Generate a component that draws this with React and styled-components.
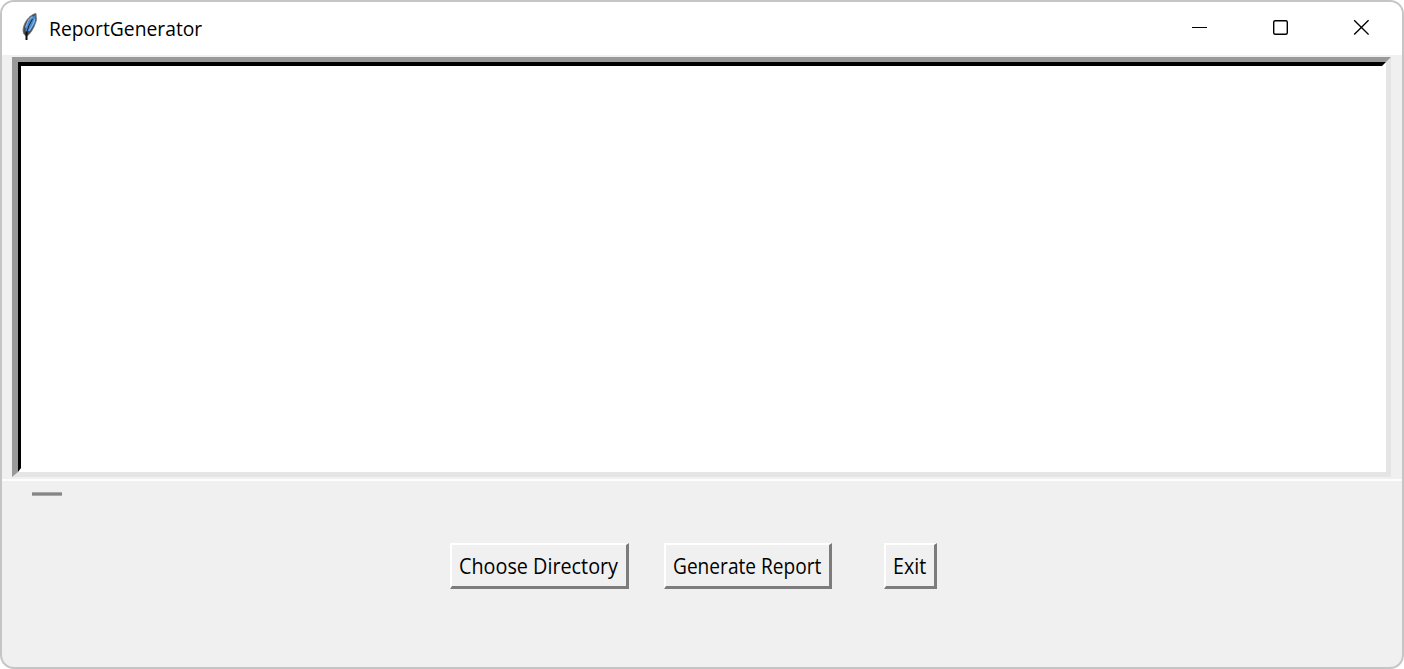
import React from 'react';
import styled, { createGlobalStyle } from 'styled-components';

const GlobalStyle = createGlobalStyle`
  * { box-sizing: border-box; }
  html, body { margin: 0; background: #fff; overflow: hidden; }
`;

const Window = styled.main`
  width: 1404px;
  height: 669px;
  display: flex;
  flex-direction: column;
  overflow: hidden;
  border: 2px solid #c5c5c5;
  border-radius: 14px;
  background: #f0f0f0;
  color: #000;
  font-family: 'Open Sans', 'Noto Sans', sans-serif;
`;

const TitleBar = styled.header`
  flex: none;
  height: 53px;
  display: flex;
  align-items: flex-start;
  background: #fff;
`;

const Feather = styled.svg`
  flex: none;
  width: 18px;
  height: 30px;
  margin: 10px 0 0 19px;
`;

const Title = styled.h1`
  margin: 12px auto 0 10px;
  font-size: 20.5px;
  line-height: 28px;
  font-weight: 400;
  white-space: nowrap;
  transform: scaleX(${(p) => p.$stretch});
  transform-origin: left;
`;

const WindowControls = styled.div`
  display: flex;
  gap: 65px;
  padding: 17px 33px 0 0;
`;

const ControlIcon = styled.svg`
  width: 16px;
  height: 17px;
  fill: none;
  stroke: #000;
`;

const OutputFrame = styled.section`
  flex: none;
  width: 1379px;
  height: 420px;
  margin: 2px 0 0 10px;
  border: 5px solid;
  border-color: #999 #e5e5e5 #e5e5e5 #999;
  border-left-width: 6px;
`;

const OutputArea = styled.div`
  height: 100%;
  border: 4px solid;
  border-width: 4px 4px 4px 3px;
  border-color: #000 #fff #fff #000;
  background: #fff;
`;

const Footer = styled.footer`
  flex: 1;
  display: flex;
  flex-direction: column;
  margin-top: 2px;
  border-top: 2px solid #fdfdfd;
`;

const StatusMark = styled.div`
  width: 30px;
  height: 4px;
  margin: 11px 0 0 30px;
  border: 1px solid #a9a9a9;
  border-width: 1px 0;
  background: #868686;
`;

const Actions = styled.div`
  display: flex;
  margin: 47px 0 0 448px;
`;

const Button = styled.button`
  flex: none;
  width: ${(p) => p.$width}px;
  height: 46px;
  margin: 0 ${(p) => p.$gap || 0}px 0 0;
  padding: 0 0 0 7px;
  display: flex;
  align-items: center;
  border-style: solid;
  border-width: 2px 3px 3px 2px;
  border-color: #fff #7c7c7c #7c7c7c #fff;
  background: #f0f0f0;
  color: #000;
  font: 400 21px/28px 'Open Sans', 'Noto Sans', sans-serif;
`;

const Label = styled.span`
  white-space: nowrap;
  transform: scaleX(${(p) => p.$stretch});
  transform-origin: left;
`;

export default function App() {
  return (
    <>
      <GlobalStyle />
      <Window>
        <TitleBar>
          <Feather viewBox="0 0 18 30">
            <path d="M15 1.500C11 2 6.500 6 4 11C2 15 1.300 19 2.800 22L5.500 24.500L8.500 22C12 18 14 13 15.500 8Z" fill="#464b52" stroke="#777" strokeWidth="0.8" />
            <path d="M14.500 3L9 6.500L5 14L4.500 19L9 19L14 11Z" fill="#4689d1" />
            <path d="M11.500 4.500L7.500 8L4.500 15.500M14 7L11.500 13L8 19" fill="none" stroke="#83b4ea" strokeWidth="1.2" />
            <path d="M11.500 7L8 13.500L5.500 21" fill="none" stroke="#222" strokeWidth="1" />
            <path d="M5.500 20V28" fill="none" stroke="#111" strokeWidth="2" />
          </Feather>
          <Title $stretch={0.94}>ReportGenerator</Title>
          <WindowControls>
            <ControlIcon viewBox="0 0 16 17"><path d="M1 8.500H16" /></ControlIcon>
            <ControlIcon viewBox="0 0 16 17"><rect x="1.700" y="1.700" width="13.600" height="13.600" rx="1.500" strokeWidth="1.400" /></ControlIcon>
            <ControlIcon viewBox="0 0 16 17"><path d="M1.200 1.200L15.600 15.600M15.600 1.200L1.200 15.600" strokeWidth="1.400" /></ControlIcon>
          </WindowControls>
        </TitleBar>
        <OutputFrame><OutputArea /></OutputFrame>
        <Footer>
          <StatusMark />
          <Actions>
            <Button $width={179} $gap={35}><Label $stretch={0.942}>Choose Directory</Label></Button>
            <Button $width={168} $gap={52}><Label $stretch={0.91}>Generate Report</Label></Button>
            <Button $width={53}><Label $stretch={0.935}>Exit</Label></Button>
          </Actions>
        </Footer>
      </Window>
    </>
  );
}
